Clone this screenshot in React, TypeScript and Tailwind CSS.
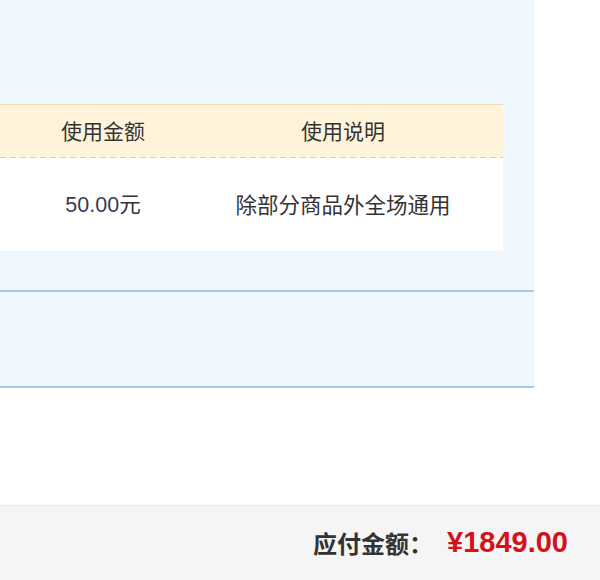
const cjk = "font-['Noto_Sans_CJK_SC','Microsoft_YaHei',sans-serif]";

const CouponTable = () => (
  <div className="w-[503px]">
    <div className="flex h-[53px] items-center border-t border-[#f3d9ad] bg-[#fff3da] text-[21px] text-[#333]">
      <div className="w-[23px]" />
      <div className="w-[160px] text-center">使用金额</div>
      <div className="flex-1 text-center">使用说明</div>
    </div>
    <div className="h-px bg-[repeating-linear-gradient(90deg,#cfcfcf_0_6px,transparent_6px_10px)]" />
    <div className="flex h-[93px] items-center bg-white text-[21.5px] text-[#333]">
      <div className="w-[23px]" />
      <div className="w-[160px] text-center">
        <span className="font-['Liberation_Sans',sans-serif] text-[#3a3a48]">50.00</span>元
      </div>
      <div className="flex-1 text-center">除部分商品外全场通用</div>
    </div>
  </div>
);

export default function App() {
  return (
    <div className={`flex h-[580px] w-[600px] flex-col bg-white ${cjk}`}>
      <div className="w-[534px] bg-[#eff7fe] pt-[104px]">
        <CouponTable />
        <div className="h-[39px]" />
        <div className="h-[2px] bg-[#a9c9e3]" />
        <div className="h-[94px]" />
        <div className="h-[2px] bg-[#a9c9e3]" />
      </div>
      <div className="flex-1" />
      <div className="flex h-[75px] items-center justify-end border-t border-[#e9e9e9] bg-[#f5f5f5] pr-[32px]">
        <span className="text-[24px] font-bold text-[#333]">应付金额：</span>
        <span className="ml-[14px] font-['Liberation_Sans',sans-serif] text-[29px] font-bold text-[#d3121b]">
          ¥1849.00
        </span>
      </div>
    </div>
  );
}
